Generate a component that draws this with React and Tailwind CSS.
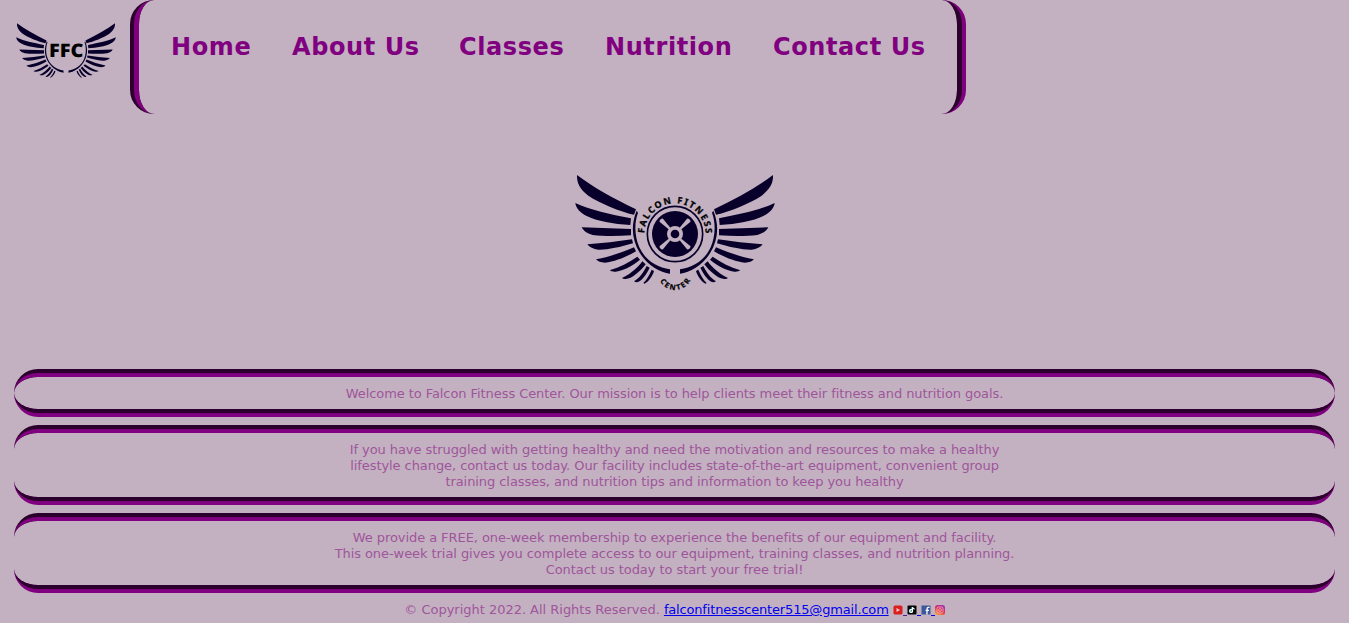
const feathers = [
  'M51 45C100 82 160 115 228 148L222 164C180 155 120 130 85 107C60 88 50 70 51 45Z',
  'M46 129C90 150 150 163 213 175L211 195C160 192 110 183 80 168C60 158 48 145 46 129Z',
  'M65 202L213 207L213 226C170 229 130 229 98 225C80 220 70 212 65 202Z',
  'M82 253C130 250 170 245 216 238L219 250C180 262 140 270 115 269C100 267 88 262 82 253Z',
  'M108 298C150 290 185 278 222 262L228 274C200 290 165 305 135 308C122 308 113 304 108 298Z',
  'M149 331C180 322 205 308 232 290L240 299C215 320 185 333 167 335Q155 336 149 331Z',
  'M186 354C205 347 232 325 247 304L257 313C240 335 215 357 197 357Q190 358 186 354Z',
  'M222 364C238 355 250 338 260 318L269 323C258 345 245 365 228 367Z',
  'M250 369C260 360 268 345 275 329L282 333C278 348 265 366 254 371Z',
  'M230 152C212 195 215 240 240 280C262 315 300 338 330 341L330 328C290 322 255 300 238 262C224 230 222 190 234 158Z',
];

function Wing() {
  return feathers.map((d) => <path key={d} d={d} />);
}

function Wings() {
  return (
    <g fill="#08002a">
      <Wing />
      <g transform="translate(690 0) scale(-1 1)">
        <Wing />
      </g>
    </g>
  );
}

function SmallLogo() {
  return (
    <svg viewBox="45 69 303 168" className="ml-[15px] mt-[23px] h-[56px] w-[101px] shrink-0">
      <g transform="translate(25.5 47.5) scale(.5)">
        <Wings />
      </g>
      <text x="198.500" y="171" textAnchor="middle" textLength="103" lengthAdjust="spacingAndGlyphs" textRendering="geometricPrecision" className="fill-black font-['Open_Sans',sans-serif] text-[56px] font-extrabold">
        FFC
      </text>
    </svg>
  );
}

function MainLogo() {
  return (
    <svg viewBox="0 0 690 420" className="h-[140px] w-[230px]">
      <defs>
        <path id="arcTop" d="M253 222A92 92 0 0 1 437 222" />
        <path id="arcBottom" d="M297 354A50 50 0 0 0 393 354" />
      </defs>
      <Wings />
      <circle cx="345" cy="222" r="83" fill="none" stroke="#08002a" strokeWidth="5" />
      <circle cx="345" cy="222" r="69" fill="#08002a" />
      <g fill="#c3b1c1">
        {[45, 135, 225, 315].map((a) => (
          <path key={a} transform={`rotate(${a} 345 222)`} d="M342 202L338 163Q345 157 352 163L348 202Z" />
        ))}
        <circle cx="345" cy="222" r="24" />
      </g>
      <circle cx="345" cy="222" r="13" fill="#08002a" />
      <g className="fill-black stroke-black font-['Noto_Sans',sans-serif] font-bold" strokeWidth="0.800" textRendering="geometricPrecision">
        <text className="text-[27px]">
          <textPath href="#arcTop" startOffset="2" textLength="285">FALCON FITNESS</textPath>
        </text>
        <text className="text-[22px]">
          <textPath href="#arcBottom" startOffset="9" textLength="112">CENTER</textPath>
        </text>
      </g>
    </svg>
  );
}

function YouTubeIcon() {
  return (
    <svg viewBox="0 0 10 10" className="size-[10px]">
      <rect x=".5" y=".5" width="9" height="9" rx="1.500" fill="#d9201f" />
      <path d="M3.500 3L7 5L3.500 7Z" fill="#f6caca" />
    </svg>
  );
}

function TikTokIcon() {
  return (
    <svg viewBox="0 0 10 10" className="size-[10px]">
      <rect x=".5" y=".5" width="9" height="9" rx="1" fill="#050505" />
      <g fill="none" strokeWidth="1.200">
        <path d="M4.500 4.600A1.400 1.400 0 1 0 5.100 6.400V2C5.300 3.200 6.200 3.700 7.300 3.800" stroke="#35c8cf" />
        <path d="M4.900 4.800A1.400 1.400 0 1 0 5.500 6.600V2.200C5.700 3.400 6.500 3.900 7.600 4" stroke="#fff" />
      </g>
    </svg>
  );
}

function FacebookIcon() {
  return (
    <svg viewBox="0 0 10 10" className="size-[10px]">
      <rect x=".5" y=".5" width="9" height="9" fill="#3b5998" />
      <path d="M6 9.500V5.500M8.500 2.400H7.300Q6.100 2.400 6.100 3.600V5.500M4.600 5.400H8" fill="none" stroke="#fff" strokeWidth="1.300" />
    </svg>
  );
}

function InstagramIcon() {
  return (
    <svg viewBox="0 0 10 10" className="size-[10px]">
      <defs>
        <linearGradient id="insta" x1="0.200" y1="1" x2="0.800" y2="0">
          <stop offset="0" stopColor="#f9a13a" />
          <stop offset=".5" stopColor="#e0304f" />
          <stop offset="1" stopColor="#9a35bd" />
        </linearGradient>
      </defs>
      <rect width="10" height="10" rx="2.500" fill="url(#insta)" />
      <rect x="2" y="2" width="6" height="6" rx="1.600" fill="none" stroke="#f3c3cb" strokeWidth=".7" />
      <circle cx="5" cy="5" r="1.400" fill="none" stroke="#f3c3cb" strokeWidth=".7" />
    </svg>
  );
}

const links = [
  ['Home', 'w-[81px]'],
  ['About Us', 'w-[127px]'],
  ['Classes', 'w-[106px]'],
  ['Nutrition', 'w-[128px]'],
  ['Contact Us', 'w-[153px]'],
];

function Panel({ children }) {
  return (
    <section className="rounded-[24px] border-y-8 border-y-[purple] pb-[7px] pt-[9px] text-center tracking-[-0.068px] [border-style:groove_none]">
      {children}
    </section>
  );
}

export default function App() {
  return (
    <div className="h-[623px] w-[1349px] overflow-hidden bg-[#c3b1c1] font-['DejaVu_Sans',sans-serif] text-[13px] leading-4 text-[#9f559b]">
      <header className="flex h-[114px]">
        <SmallLogo />
        <nav className="ml-[14px] flex h-[114px] w-[836px] gap-10 rounded-[24px] border-x-[9px] border-x-[purple] pl-8 pt-[31px] [border-style:none_groove]">
          {links.map(([label, width]) => (
            <a key={label} href="#" className={`${width} h-8 whitespace-nowrap text-[24px] font-bold leading-8 tracking-[0.6px] text-[purple]`}>
              {label}
            </a>
          ))}
        </nav>
      </header>
      <div className="mt-[46px] flex h-[209px] justify-center">
        <MainLogo />
      </div>
      <main className="mx-[14px] flex flex-col gap-2">
        <Panel>
          <p>Welcome to Falcon Fitness Center. Our mission is to help clients meet their fitness and nutrition goals.</p>
        </Panel>
        <Panel>
          <p>If you have struggled with getting healthy and need the motivation and resources to make a healthy</p>
          <p>lifestyle change, contact us today. Our facility includes state-of-the-art equipment, convenient group</p>
          <p>training classes, and nutrition tips and information to keep you healthy</p>
        </Panel>
        <Panel>
          <p>We provide a FREE, one-week membership to experience the benefits of our equipment and facility.</p>
          <p>This one-week trial gives you complete access to our equipment, training classes, and nutrition planning.</p>
          <p>Contact us today to start your free trial!</p>
        </Panel>
      </main>
      <footer className="mt-[9px] flex justify-center">
        <p className="whitespace-nowrap tracking-[-0.02px]">
          © Copyright 2022. All Rights Reserved.{' '}
          <a href="#" className="tracking-[-0.17px] text-[#0000ee] underline">falconfitnesscenter515@gmail.com</a>
        </p>
        <div className="ml-1 flex h-[15px] items-center">
          <YouTubeIcon />
          <span className="h-[13px] w-1 border-b border-[#551a8b]" />
          <TikTokIcon />
          <span className="h-[13px] w-1 border-b border-[#0000ee]" />
          <FacebookIcon />
          <span className="h-[13px] w-1 border-b border-[#0000ee]" />
          <InstagramIcon />
        </div>
      </footer>
    </div>
  );
}
